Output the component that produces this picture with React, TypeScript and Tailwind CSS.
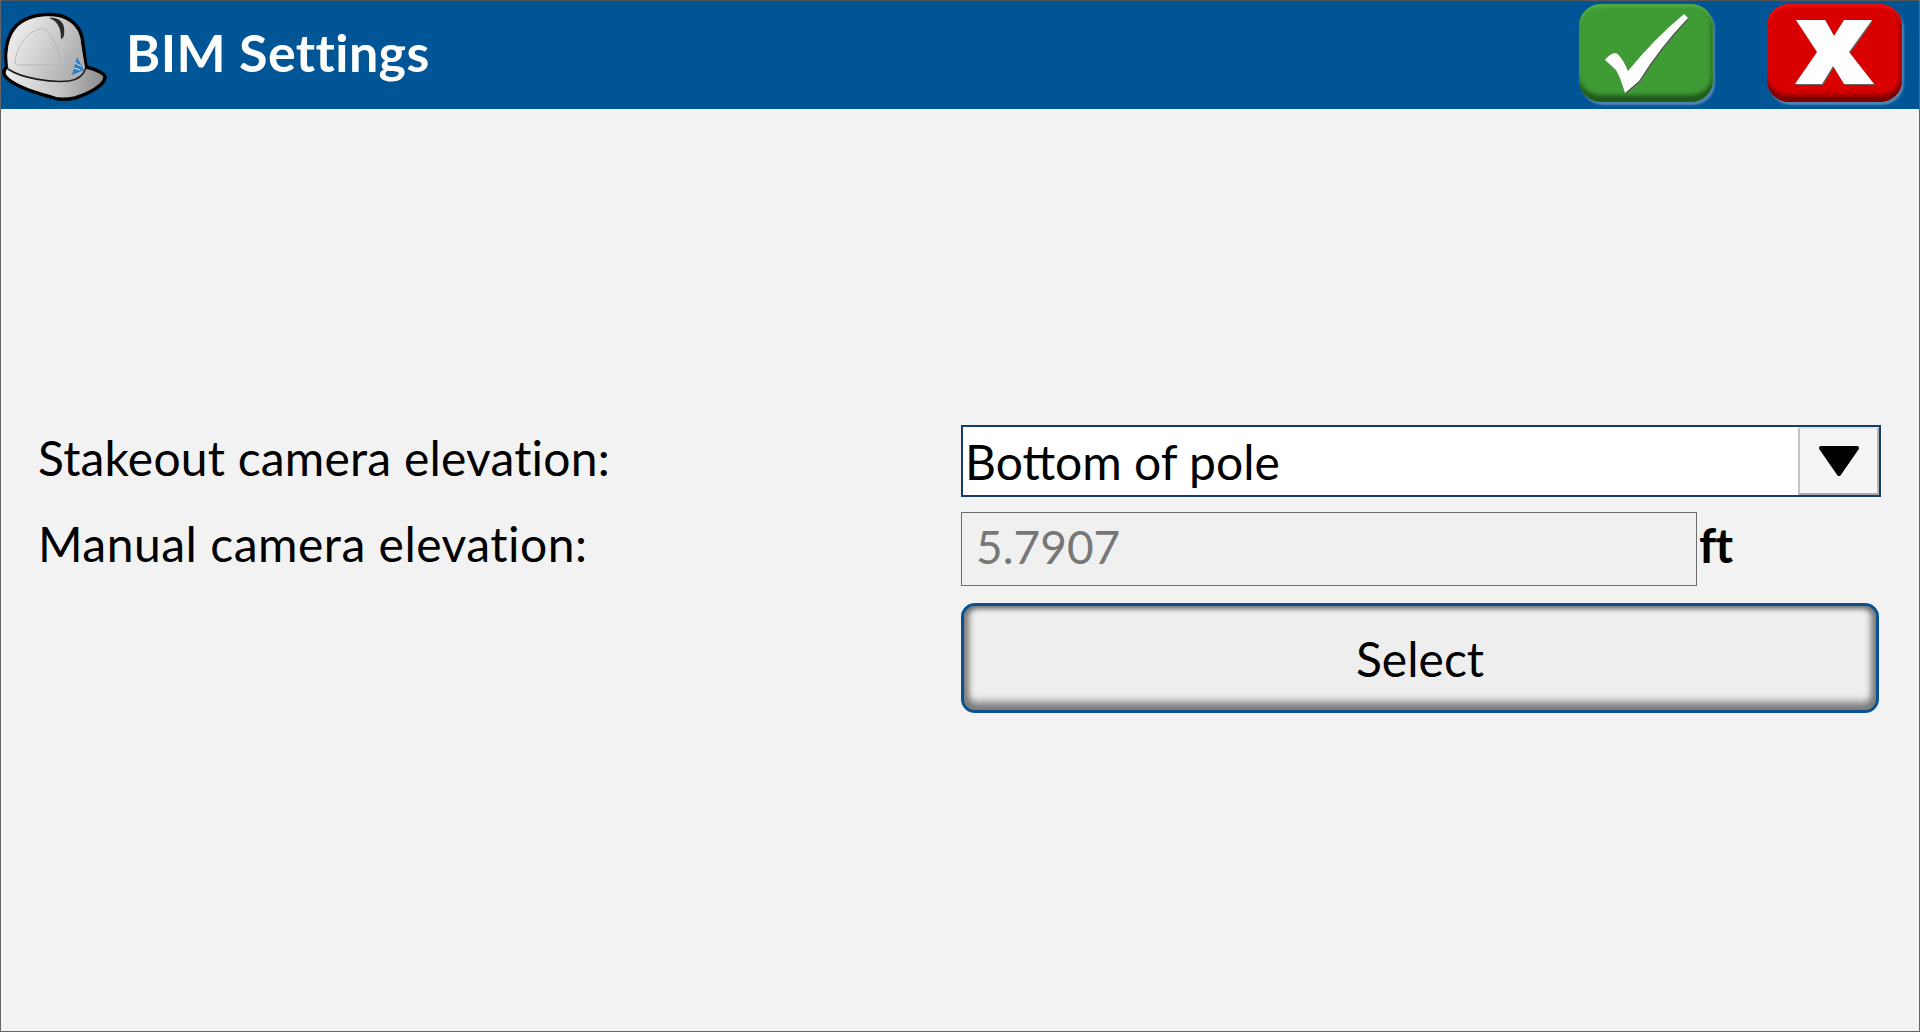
import React from "react";

const Helmet = () => (
  <svg width="108" height="100" viewBox="0 0 108 100" className="shrink-0">
    <defs>
      <linearGradient id="dome" x1="0" y1="0" x2="1" y2="0.4">
        <stop offset="0" stopColor="#f4f4f4" />
        <stop offset="0.4" stopColor="#dcdcdc" />
        <stop offset="1" stopColor="#b0b0b0" />
      </linearGradient>
      <linearGradient id="brim" x1="0" y1="0" x2="1" y2="0">
        <stop offset="0" stopColor="#eeeeee" />
        <stop offset="0.55" stopColor="#c4c4c4" />
        <stop offset="1" stopColor="#8a8a8a" />
      </linearGradient>
    </defs>
    <path
      d="M6 62C3 46 6 30 16 20C26 11 42 8 56 10C68 12 78 20 81 32L85 62C93 64 103 67 104 72C104 80 89 88 74 93C65 95 57 95 50 92C35 88 12 81 4 71C2 67 3 64 6 62Z"
      fill="url(#brim)"
      stroke="#000"
      strokeWidth="3.5"
      strokeLinejoin="round"
    />
    <path
      d="M7 62C5 46 8 31 17 22C27 13 42 10 55 12C67 14 76 21 79 33L84 62C83 68 78 73 70 75C50 76 20 72 7 62Z"
      fill="url(#dome)"
    />
    <path d="M7 64C20 73 50 78 68 76C76 75 82 71 85 63" fill="none" stroke="#1a1a1a" strokeWidth="1.6" />
    <path d="M48 13C56 16 60 22 60 34C64 34 64 24 62 19C59 14 54 12 48 13Z" fill="#2a2a2a" />
    <path d="M14 59C15 42 24 29 38 24C48 21 54 36 60 54" fill="none" stroke="#9fb0c0" strokeWidth="0.8" strokeDasharray="6 1" />
    <path d="M16 60L54 60M66 52L79 44M66 52L64 72" fill="none" stroke="#aab4bd" strokeWidth="0.9" />
    <path d="M76 52L83 65L71 70Z" fill="#2f80c4" />
    <path d="M74 58L80 61M73 63L79 65" stroke="#dfeaf3" strokeWidth="1" />
  </svg>
);

const Check = () => (
  <svg width="134" height="98" viewBox="0 0 134 98" className="absolute inset-0">
    <path d="M27 57C30 53 34 50 38 50C42 52 47 60 50 68Q76 36 106 11L110 15Q82 44 61 78L47 90C44 80 41 71 37 66Z" fill="#555" />
    <path d="M26 56C29 52 33 49 37 49C41 51 46 59 49 67Q75 35 105 10L109 14Q81 43 60 77L46 89C43 79 40 70 36 65Z" fill="#fff" />
  </svg>
);

const Cross = () => (
  <svg width="135" height="98" viewBox="0 0 135 98" className="absolute inset-0">
    <path d="M30 17L59 17L68 33L78 17L106 17L83 49L108 81L78 81L67 63L56 81L29 81L51 49Z" fill="#666" />
    <path d="M29 16L58 16L67 32L77 16L105 16L82 48L107 80L77 80L66 62L55 80L28 80L50 48Z" fill="#fff" />
  </svg>
);

export default function App() {
  return (
    <div className="w-[1920px] h-[1032px] flex flex-col bg-[#f2f2f2] border-l border-r border-b border-[#666] overflow-hidden font-['Lato','Open_Sans',sans-serif] text-black">
      <div className="h-[109px] shrink-0 bg-[#005596] border-t border-[#555] flex items-center">
        <Helmet />
        <h1 className="ml-[17px] -mt-[6px] text-[52px] font-bold text-white tracking-[0.4px]">BIM Settings</h1>
        <div className="ml-auto flex items-center gap-[54px] pr-[17px] pb-[5px]">
          <div className="relative w-[134px] h-[98px] rounded-[22px] bg-[#3f9c35] shadow-[2px_3px_2px_#4f86b5,inset_0_-9px_4px_-2px_#1f5a1a,inset_0_3px_3px_#55ab48,inset_-3px_0_3px_#2e7a26]">
            <Check />
          </div>
          <div className="relative w-[135px] h-[98px] rounded-[22px] bg-[#d90000] shadow-[2px_3px_2px_#4f86b5,inset_0_-9px_4px_-2px_#7a0000,inset_0_3px_3px_#f01010,inset_-3px_0_3px_#a00000]">
            <Cross />
          </div>
        </div>
      </div>

      <div className="pt-[316px] pl-[37px] pr-[38px] grid grid-cols-[923px_1fr] grid-rows-[72px_74px_110px] gap-y-[15px] text-[48px]">
        <div className="pt-[3px] leading-[60px] tracking-[0.2px]">Stakeout camera elevation:</div>
        <div className="flex h-[72px] border-2 border-[#123d6e] bg-white">
          <div className="flex-1 pl-[2px] leading-[70px]">Bottom of pole</div>
          <div className="w-[81px] flex items-center justify-center bg-[#f5f5f5] border-2 border-t-[#e3e6e8] border-l-[#c4c4c4] border-r-[#b4b4b4] border-b-[#aaaaaa]">
            <svg width="44" height="34" viewBox="0 0 44 34">
              <path d="M4 4L40 4L22 30Z" fill="#000" stroke="#000" strokeWidth="4" strokeLinejoin="round" />
            </svg>
          </div>
        </div>

        <div className="pt-[2px] leading-[60px] tracking-[0.5px]">Manual camera elevation:</div>
        <div className="flex items-center">
          <div className="w-[736px] h-[74px] border border-[#6c6c6c] bg-[#f0f0f0] pl-[14px] leading-[68px] text-[46px] text-[#777]">5.7907</div>
          <span className="ml-[2px] -mt-[8px] font-bold tracking-[-1px]">ft</span>
        </div>

        <div />
        <button className="mt-[2px] mr-[2px] h-[110px] pt-[2px] rounded-[14px] border-[3px] border-[#0a528f] bg-[#eeeeee] shadow-[inset_0_8px_5px_-5px_#6f6f6f,inset_0_-14px_8px_-6px_#7a7a7a,inset_10px_0_6px_-5px_#7a7a7a,inset_-10px_0_6px_-5px_#7a7a7a]">
          Select
        </button>
      </div>
    </div>
  );
}
